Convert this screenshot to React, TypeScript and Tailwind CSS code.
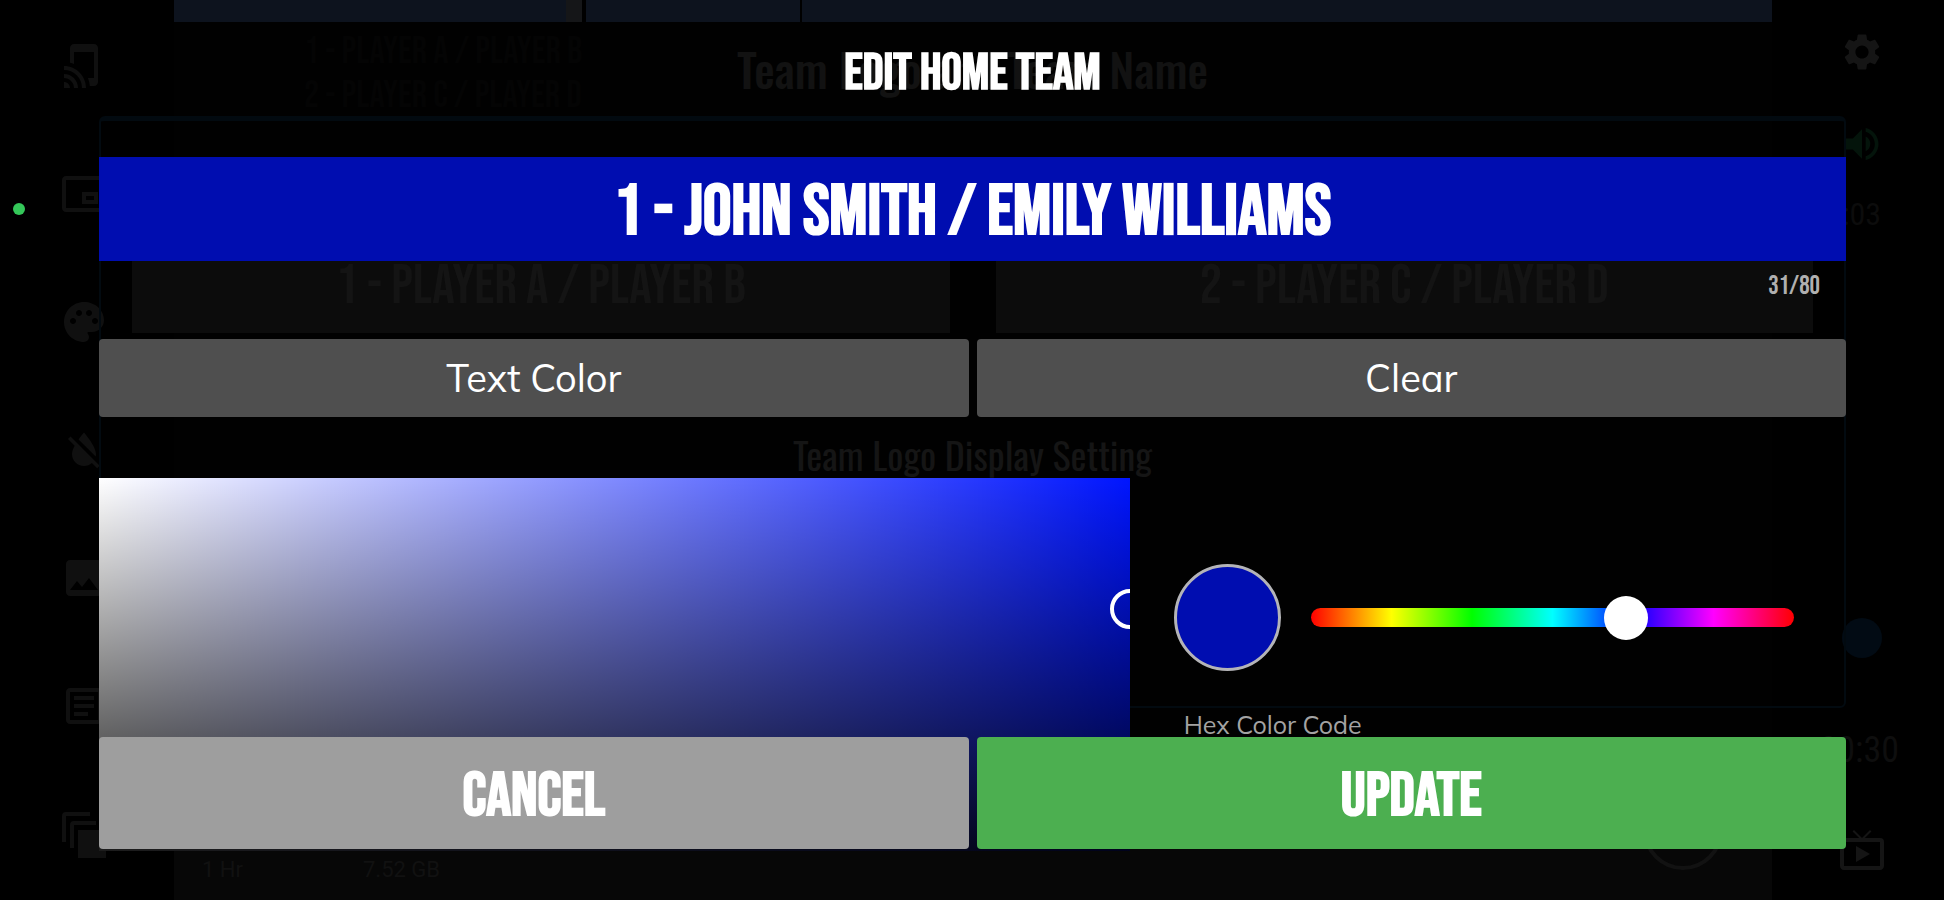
import { useState } from "react";
import type { ReactNode } from "react";
import {
  MdFormatColorReset,
  MdImage,
  MdLiveTv,
  MdOutlineArticle,
  MdOutlinePictureInPictureAlt,
  MdPalette,
  MdSettings,
  MdTapAndPlay,
  MdVolumeUp,
} from "react-icons/md";

const DISPLAY = "font-['Bebas_Neue','Roboto_Condensed',sans-serif]";
const HEADING = "font-['Oswald','Roboto_Condensed',sans-serif]";
const BODY = "font-['Mulish','Nunito','Lato',sans-serif]";
const MAX_NAME = 80;

function StackIcon() {
  return (
    <svg viewBox="0 0 24 24" className="size-12" fill="none" stroke="currentColor" strokeWidth="2">
      <path d="M2 16V3a1 1 0 0 1 1-1h12" />
      <path d="M6 19V7.500a1 1 0 0 1 1-1h11" />
      <path d="M10 11h12v12H10z" fill="currentColor" />
    </svg>
  );
}

function LeftRail() {
  return (
    <nav aria-label="Stream tools" className="relative flex w-[174px] flex-col gap-20 pl-[60px] pt-[42px] text-5xl text-[#101010]">
      <span className="absolute left-[13px] top-[203px] size-3 rounded-full bg-[#34c759]" />
      <MdTapAndPlay />
      <MdOutlinePictureInPictureAlt />
      <MdPalette />
      <MdFormatColorReset />
      <MdImage />
      <MdOutlineArticle />
      <StackIcon />
    </nav>
  );
}

function RightRail() {
  return (
    <nav aria-label="Game controls" className="flex w-[172px] flex-col pt-[30px] text-[44px] text-[#151515]">
      <MdSettings className="ml-[68px]" />
      <MdVolumeUp className="ml-[68px] mt-12 text-[#04140b]" />
      <span className="mr-[63px] mt-7 text-right font-['Roboto_Condensed',sans-serif] text-[32px] leading-10 text-[#0c0c0c]">
        00:03
      </span>
      <div className="mt-auto flex flex-col pb-[26px]">
        <span className="ml-[70px] size-10 rounded-full bg-[#020b14]" />
        <span className="mr-[45px] mt-[72px] text-right font-['Roboto_Condensed',sans-serif] text-[36px] leading-10 text-[#0e0e0e]">
          00:30
        </span>
        <MdLiveTv className="ml-[66px] mt-[56px] text-5xl" />
      </div>
    </nav>
  );
}

function Stage() {
  return (
    <div className="absolute inset-0 flex">
      <LeftRail />
      <main className="flex flex-1 flex-col bg-[#010101]">
        <div className="flex h-[22px] bg-[#0d131e]">
          <span className="ml-[392px] w-4 bg-[#151618]" />
          <span className="w-1 bg-black" />
          <span className="ml-[214px] w-0.5 bg-black" />
        </div>
        <div className={`${DISPLAY} ml-[130px] mt-2 flex flex-col text-[38px] leading-[44px] text-[#040404]`}>
          <span>1 - Player A / Player B</span>
          <span>2 - Player C / Player D</span>
        </div>
        <div className="mt-auto flex h-[110px] justify-between bg-[#070707]">
          <div className="flex gap-[120px] self-end pb-4 pl-7 font-['Roboto',sans-serif] text-[22px] leading-7 text-[#111111]">
            <span>1 Hr</span>
            <span>7.52 GB</span>
          </div>
          <span className="mr-[49px] size-20 rounded-full border-4 border-[#121212]" />
        </div>
      </main>
      <RightRail />
    </div>
  );
}

function TeamSettings() {
  return (
    <section className="absolute inset-0 flex flex-col pl-[99px] pr-[98px]">
      <h2 className={`${HEADING} flex h-[116px] items-center justify-center pt-5 text-[46px] font-medium text-[#121212]`}>
        Team Logo and Team Name
      </h2>
      <div className="flex h-[592px] flex-col rounded-md border-2 border-t-[5px] border-[#020a10] px-[31px] pt-[119px]">
        <div className={`${DISPLAY} grid grid-cols-2 gap-[46px] text-center text-[56px] leading-[93px] text-[#141414]`}>
          <span className="bg-[#0c0c0c]">1 - Player A / Player B</span>
          <span className="bg-[#0c0c0c]">2 - Player C / Player D</span>
        </div>
        <h3 className={`${HEADING} mt-[93px] text-center text-[38px] leading-[56px] text-[#151515]`}>
          Team Logo Display Setting
        </h3>
      </div>
    </section>
  );
}

function DialogButton({ className, children }: { className: string; children: ReactNode }) {
  return (
    <button type="button" className={`flex items-center justify-center rounded-[4px] text-white ${className}`}>
      {children}
    </button>
  );
}

function ColorPicker() {
  const [hue, setHue] = useState(240);
  return (
    <div className="flex h-[420px]">
      <div className="relative w-[59%] overflow-hidden bg-[#0015ff] bg-[linear-gradient(to_bottom,transparent,#000),linear-gradient(to_right,#fff,transparent)]">
        <span className="absolute -right-5 top-[111px] size-10 rounded-full border-4 border-white" />
      </div>
      <div className="flex flex-1 flex-col pl-11 pr-[52px] pt-[86px]">
        <div className="flex items-center gap-[30px]">
          <span className="size-[107px] shrink-0 rounded-full border-[3px] border-[#b4b4b8] bg-[#000db0]" />
          <input
            type="range"
            aria-label="Hue"
            min={0}
            max={360}
            value={hue}
            onChange={(e) => setHue(Number(e.target.value))}
            className="h-[19px] min-w-0 flex-1 appearance-none rounded-full bg-[linear-gradient(to_right,#f00,#ff0,#0f0,#0ff,#00f,#f0f,#f00)] [&::-webkit-slider-thumb]:size-11 [&::-webkit-slider-thumb]:appearance-none [&::-webkit-slider-thumb]:rounded-full [&::-webkit-slider-thumb]:bg-white"
          />
        </div>
        <span className={`${BODY} mt-[38px] pl-2.5 text-[25px] leading-8 text-[#a3a3a3]`}>Hex Color Code</span>
      </div>
    </div>
  );
}

function EditTeamDialog() {
  const [name, setName] = useState("1 - JOHN SMITH / EMILY WILLIAMS");
  return (
    <section role="dialog" aria-labelledby="edit-title" className="absolute inset-0 flex flex-col pb-[49px] pl-[99px] pr-[98px]">
      <h1
        id="edit-title"
        className={`${DISPLAY} flex h-[157px] items-start justify-center pt-11 text-[51px] font-bold leading-[60px] text-white`}
      >
        EDIT HOME TEAM
      </h1>
      <input
        aria-label="Team name"
        maxLength={MAX_NAME}
        value={name}
        onChange={(e) => setName(e.target.value)}
        className={`${DISPLAY} h-[104px] w-full bg-[#000db0] pt-2 text-center text-[71px] font-bold text-white outline-none`}
      />
      <p className={`${DISPLAY} h-[78px] pr-[26px] pt-2.5 text-right text-[26px] leading-8 text-[#b0b0b0]`}>
        {name.length}/{MAX_NAME}
      </p>
      <div className={`${BODY} grid h-[78px] grid-cols-2 gap-2 text-[38px]`}>
        <DialogButton className="bg-[#4f4f4f]">Text Color</DialogButton>
        <DialogButton className="bg-[#4f4f4f]">Clear</DialogButton>
      </div>
      <div className="relative mt-[61px] min-h-0 flex-1 overflow-hidden">
        <ColorPicker />
        <div className={`${DISPLAY} absolute inset-x-0 bottom-0.5 grid h-28 grid-cols-2 gap-2 text-[62px] font-bold`}>
          <DialogButton className="bg-[#9e9e9e] pt-1.5">CANCEL</DialogButton>
          <DialogButton className="bg-[#4caf50] pt-1.5">UPDATE</DialogButton>
        </div>
      </div>
    </section>
  );
}

export default function App() {
  return (
    <div className="relative h-screen min-h-[720px] overflow-hidden bg-black">
      <Stage />
      <TeamSettings />
      <EditTeamDialog />
    </div>
  );
}
